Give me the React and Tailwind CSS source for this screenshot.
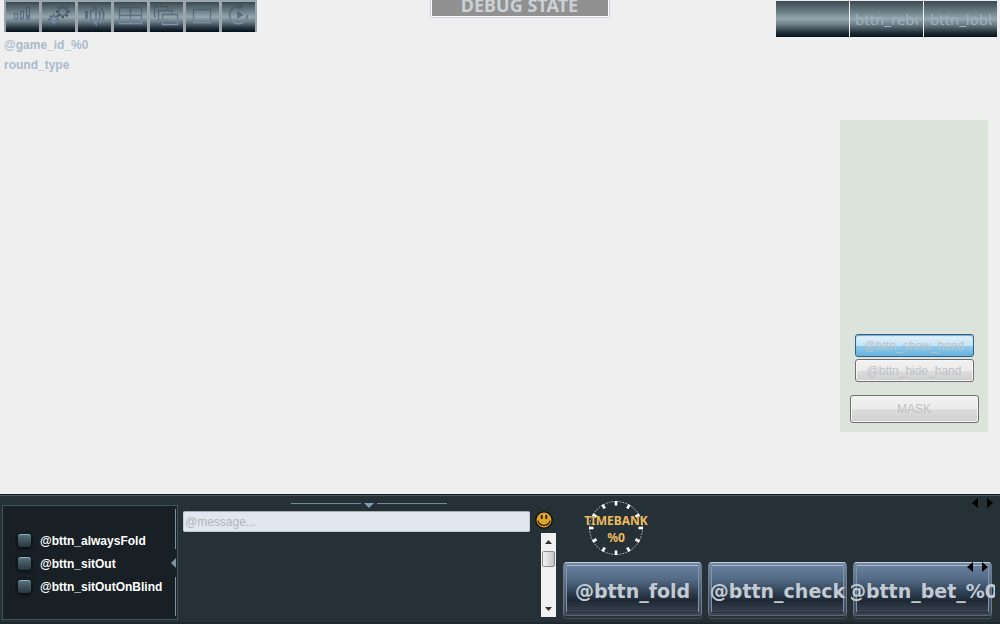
import React from 'react';

const DARK_METAL =
  'bg-[linear-gradient(to_bottom,#3b4a52_0%,#687a82_28%,#96a7af_50%,#6c7c84_66%,#26343e_86%,#03101b_100%)]';

function Gear({ cx, cy, r }) {
  const teeth = [0, 45, 90, 135, 180, 225, 270, 315];
  return (
    <g>
      <circle cx={cx} cy={cy} r={r * 0.66} fill="none" strokeWidth="1.7" />
      {teeth.map((a) => (
        <line
          key={a}
          x1={cx}
          y1={cy - r * 0.75}
          x2={cx + 0.01}
          y2={cy - r * 1.12}
          strokeWidth={r * 0.42}
          transform={`rotate(${a} ${cx} ${cy})`}
        />
      ))}
    </g>
  );
}

const TOOLS = [
  {
    label: 'Statistics',
    art: (
      <g>
        <path d="M8.5 11.5h3v8h-3zM14.5 9.5h3v10h-3zM20.5 5.5h3v14h-3z" strokeWidth="1.2" />
        <path d="M8 16h4v4H8zM14 15h4v5h-4zM20 13h4v7h-4z" fill="url(#toolInk)" stroke="none" />
      </g>
    ),
  },
  {
    label: 'Settings',
    art: (
      <g>
        <Gear cx={20.7} cy={9.5} r={6} />
        <Gear cx={11.7} cy={17.5} r={4.8} />
      </g>
    ),
  },
  {
    label: 'Sound',
    art: (
      <g>
        <path d="M7 9h3v8H7z" fill="url(#toolInk)" stroke="none" />
        <path d="M12.5 10L18 5v17l-5.5-5z" strokeWidth="1.5" />
        <path d="M20.5 9q3 4.500 0 9M22.500 6q6.500 7.500 0 15" strokeWidth="1.600" />
      </g>
    ),
  },
  { label: 'Tile tables', art: <path d="M5.5 5.500h22v16h-22zM16.500 5.500v16M5.500 13.500h22" strokeWidth="1.300" /> },
  {
    label: 'Cascade tables',
    art: <path d="M12.500 12.500h15v10h-15zM10 18.500H8.500v-10h14v2M6 14.500H4.500v-10h13v2" strokeWidth="1.300" />,
  },
  { label: 'Single table', art: <path d="M7.500 7.500h17v13h-17z" strokeWidth="1.300" /> },
  {
    label: 'Replay',
    art: (
      <g>
        <path d="M25.500 13a9 8.700 0 1 1-9-8.700h2" strokeWidth="1.600" />
        <path d="M16.500 1l5 3.500-5 3.500z" fill="url(#toolInk)" stroke="none" />
        <path d="M15 9l6.500 4-6.500 4z" fill="url(#toolInk)" stroke="none" />
      </g>
    ),
  },
];

function ToolButton({ label, children }) {
  return (
    <button type="button" aria-label={label} className={`h-[30px] w-[33px] ${DARK_METAL}`}>
      <svg viewBox="0 0 33 30" className="block h-[30px] w-[33px]" fill="none" stroke="url(#toolInk)">
        <defs>
          <linearGradient id="toolInk" gradientUnits="userSpaceOnUse" x1="0" y1="3" x2="0" y2="24">
            <stop offset="0" stopColor="#43525e" />
            <stop offset="0.500" stopColor="#5a6f82" />
            <stop offset="1" stopColor="#7f9bb9" />
          </linearGradient>
        </defs>
        {children}
      </svg>
    </button>
  );
}

function LobbyButton({ children, label }) {
  return (
    <button
      type="button"
      aria-label={label}
      className={`flex h-9 w-[73px] items-center justify-center text-[15px] text-[#9fb1c0] ${DARK_METAL}`}
    >
      <span className="flex w-[63px] justify-center overflow-hidden whitespace-nowrap font-['Noto_Sans',sans-serif]">
        <span>{children}</span>
      </span>
    </button>
  );
}

function CheckRow({ id, children }) {
  return (
    <div className="flex h-[23px] items-center">
      <input
        id={id}
        type="checkbox"
        className="h-[13px] w-[13px] appearance-none rounded-[3px] border-t border-[#8fb4c0] bg-linear-to-b from-[#56707a] to-[#27373f] shadow-[0_1px_3px_1px_#0b0f12] checked:from-[#a9c5cf]"
      />
      <label htmlFor={id} className="pl-[9px] text-xs font-bold text-white">
        {children}
      </label>
    </div>
  );
}

function ActionButton({ children }) {
  return (
    <button
      type="button"
      className="flex h-[54px] w-[139px] items-center justify-center rounded-[4px] border border-x-[#6b7b8c] border-t-[#c3ccd8] border-b-[#5b6874] bg-linear-to-b from-[#7189a6] to-[#3a4452] p-[2px] shadow-[0_3px_0_-1px_#253136,0_3px_0_0_#3f5059]"
    >
      <span className="flex h-full w-full items-center justify-center rounded-[2px] border border-x-[#7f93aa] border-t-[#a9bacd] border-b-[#2a2f3b] bg-[linear-gradient(to_bottom,#69809c_0%,#526984_30%,#2c3c4e_60%,#1e2935_75%,#3a4350_100%)]">
        <span className="-mx-2 flex w-36 shrink-0 justify-center overflow-hidden pt-1 font-['DejaVu_Sans',sans-serif] text-[19px] leading-6 font-bold whitespace-nowrap text-[#c3cad1]">
          <span>{children}</span>
        </span>
      </span>
    </button>
  );
}

function Stepper({ label }) {
  return (
    <div className="flex gap-[9px]" role="group" aria-label={label}>
      <button type="button" aria-label={`${label} down`}>
        <svg viewBox="0 0 6 10" className="block h-[10px] w-[6px]"><path d="M6 0v10L0 5z" fill="#000" /></svg>
      </button>
      <button type="button" aria-label={`${label} up`}>
        <svg viewBox="0 0 6 10" className="block h-[10px] w-[6px]"><path d="M0 0v10l6-5z" fill="#000" /></svg>
      </button>
    </div>
  );
}

function TimeBank() {
  const ticks = [0, 30, 60, 90, 120, 150, 180, 210, 240, 270, 300, 330];
  return (
    <div className="relative flex h-14 w-16 items-center justify-center">
      <svg viewBox="0 0 56 56" className="block h-14 w-14">
        <circle cx="28" cy="28" r="26.500" fill="none" stroke="#c9ced0" strokeWidth="1" strokeDasharray="1.500 1.280" />
        {ticks.map((a) => (
          <line key={a} x1="28" y1="1" x2="28" y2="5.500" stroke="#fff" strokeWidth="2.600" transform={`rotate(${a} 28 28)`} />
        ))}
      </svg>
      <p className="absolute inset-x-0 top-3 text-center font-['Noto_Sans',sans-serif] text-xs leading-[17px] font-bold text-[#edbb5e]">
        TIMEBANK
        <br />
        %0
      </p>
    </div>
  );
}

function Smiley() {
  return (
    <svg viewBox="0 0 18 18" className="block h-[18px] w-[18px]">
      <circle cx="9" cy="9" r="8.200" fill="#dfa622" stroke="#0d0d08" strokeWidth="1.300" />
      <ellipse cx="6.700" cy="6" rx="1.100" ry="2.300" fill="#2a1c05" />
      <ellipse cx="11.300" cy="6" rx="1.100" ry="2.300" fill="#2a1c05" />
      <path d="M2.800 9.500q1.200 4.800 6.200 4.800t6.200-4.800" fill="none" stroke="#3a2706" strokeWidth="1.200" />
    </svg>
  );
}

export default function App() {
  return (
    <div className="flex min-h-screen flex-col bg-[#efefef] font-['Liberation_Sans',Arial,sans-serif]">
      <header className="flex items-start justify-between pr-[3px] pl-1">
        <div>
          <nav className="flex gap-[3px] bg-[#9ba6ae] px-[2px] pt-[2px]">
            {TOOLS.map((t) => (
              <ToolButton key={t.label} label={t.label}>
                {t.art}
              </ToolButton>
            ))}
          </nav>
          <div className="pt-[3px] text-xs leading-5 font-bold text-[#a9bbcb]">
            <p>@game_id_%0</p>
            <p>round_type</p>
          </div>
        </div>
        <div className="ml-[6px] h-[18px] w-[180px] overflow-hidden border border-t-0 border-[#ced3dd]">
          <div className="flex h-[17px] items-end justify-center border border-t-0 border-white bg-[#919191] font-['Noto_Sans',sans-serif] text-[18px] leading-[22px] font-bold text-[#ccd1d6]">
            DEBUG STATE
          </div>
        </div>
        <div className="flex gap-px pt-px">
          <LobbyButton label="Empty" />
          <LobbyButton>@bttn_rebuy</LobbyButton>
          <LobbyButton>@bttn_lobby</LobbyButton>
        </div>
      </header>

      <main className="flex flex-1 items-start justify-end pt-[45px] pr-3">
        <aside className="flex h-[312px] w-[148px] flex-col items-center justify-end bg-[#dbe3db] pb-[9px] text-xs text-[#bfc1c4]">
          <button
            type="button"
            className="mb-[2px] h-[23px] w-[119px] rounded-[3px] border border-[#2c628b] bg-[linear-gradient(to_bottom,#e3f3fc_0%,#c3e3f6_50%,#93cdee_51%,#66b1dc_100%)] shadow-[inset_0_1px_1px_#7aa5c2]"
          >
            @bttn_show_hand
          </button>
          <button
            type="button"
            className="mb-[13px] h-[23px] w-[119px] rounded-[3px] border border-[#707070] bg-[linear-gradient(to_bottom,#f2f2f2_0%,#ebebeb_50%,#dddddd_51%,#cfcfcf_100%)] shadow-[inset_0_0_0_1px_#f6f6f6]"
          >
            @bttn_hide_hand
          </button>
          <button
            type="button"
            className="h-7 w-[129px] rounded-[3px] border border-[#707070] bg-[linear-gradient(to_bottom,#f2f2f2_0%,#ebebeb_50%,#dddddd_51%,#cfcfcf_100%)] shadow-[inset_0_0_0_1px_#f6f6f6]"
          >
            MASK
          </button>
        </aside>
      </main>

      <footer className="border-t border-[#14191c] bg-[#253136]">
        <div className="flex h-[129px] border-t border-b-2 border-t-[#465b64] border-b-[#1d272c]">
          <section className="mt-[9px] ml-[2px] flex h-[115px] w-[176px] justify-between border border-[#40545f] bg-[#181f25]">
            <div className="flex flex-col justify-center pt-[2px] pl-[15px]">
              <CheckRow id="always-fold">@bttn_alwaysFold</CheckRow>
              <CheckRow id="sit-out">@bttn_sitOut</CheckRow>
              <CheckRow id="sit-out-blind">@bttn_sitOutOnBlind</CheckRow>
            </div>
            <button type="button" aria-label="Collapse options" className="flex flex-col items-end py-[3px] pr-px">
              <span className="w-px flex-1 bg-[#7995a2]" />
              <svg viewBox="0 0 5 10" className="my-[9px] block h-[10px] w-[5px]">
                <path d="M5 0v10L0 5z" fill="#7995a2" />
              </svg>
              <span className="w-px flex-1 bg-[#7995a2]" />
            </button>
          </section>

          <section className="ml-[5px] flex flex-1 flex-col">
            <button type="button" aria-label="Collapse chat" className="flex h-[15px] items-start justify-center gap-[3px] pt-[7px] pr-[2px]">
              <span className="h-px w-[70px] bg-[#6f8c98]" />
              <svg viewBox="0 0 10 5" className="block h-[5px] w-[10px]">
                <path d="M0 0h10L5 5z" fill="#7f9eab" />
              </svg>
              <span className="h-px w-[70px] bg-[#6f8c98]" />
            </button>
            <div className="flex items-start">
              <input
                type="text"
                aria-label="Message"
                placeholder="@message..."
                className="h-[21px] min-w-0 flex-1 rounded-[2px] border border-[#c3cad5] border-t-[#a5abb3] bg-[#e0e7f0] px-px text-xs text-[#333] placeholder:text-[#b3b5b8]"
              />
              <button type="button" aria-label="Insert smiley" className="mr-[3px] ml-[5px]">
                <Smiley />
              </button>
            </div>
            <div className="mt-px flex justify-end">
              <div className="flex h-[84px] w-[15px] flex-col items-center bg-[#f1f1f1]">
                <button type="button" aria-label="Scroll up" className="flex h-[18px] w-full items-center justify-center">
                  <svg viewBox="0 0 7 4" className="block h-1 w-[7px]"><path d="M0 4h7L3.500 0z" fill="#333" /></svg>
                </button>
                <div className="h-4 w-[13px] rounded-[2px] border border-[#8d8d8d] bg-linear-to-r from-[#f3f3f3] via-[#dcdcdf] to-[#c4c4c8]" />
                <button type="button" aria-label="Scroll down" className="mt-auto flex h-4 w-full items-center justify-center">
                  <svg viewBox="0 0 7 4" className="block h-1 w-[7px]"><path d="M0 0h7L3.500 4z" fill="#333" /></svg>
                </button>
              </div>
            </div>
          </section>

          <section className="ml-[7px] flex w-[437px] flex-col">
            <div className="flex h-[66px] items-start justify-between pt-[2px] pr-[7px] pl-[21px]">
              <div className="pt-[2px]">
                <TimeBank />
              </div>
              <Stepper label="Bet step" />
            </div>
            <div className="flex gap-[6px]">
              <ActionButton>@bttn_fold</ActionButton>
              <ActionButton>@bttn_check</ActionButton>
              <div className="relative">
                <ActionButton>@bttn_bet_%0</ActionButton>
                <div className="absolute top-0 right-1">
                  <Stepper label="Bet amount" />
                </div>
              </div>
            </div>
          </section>
        </div>
      </footer>
    </div>
  );
}
